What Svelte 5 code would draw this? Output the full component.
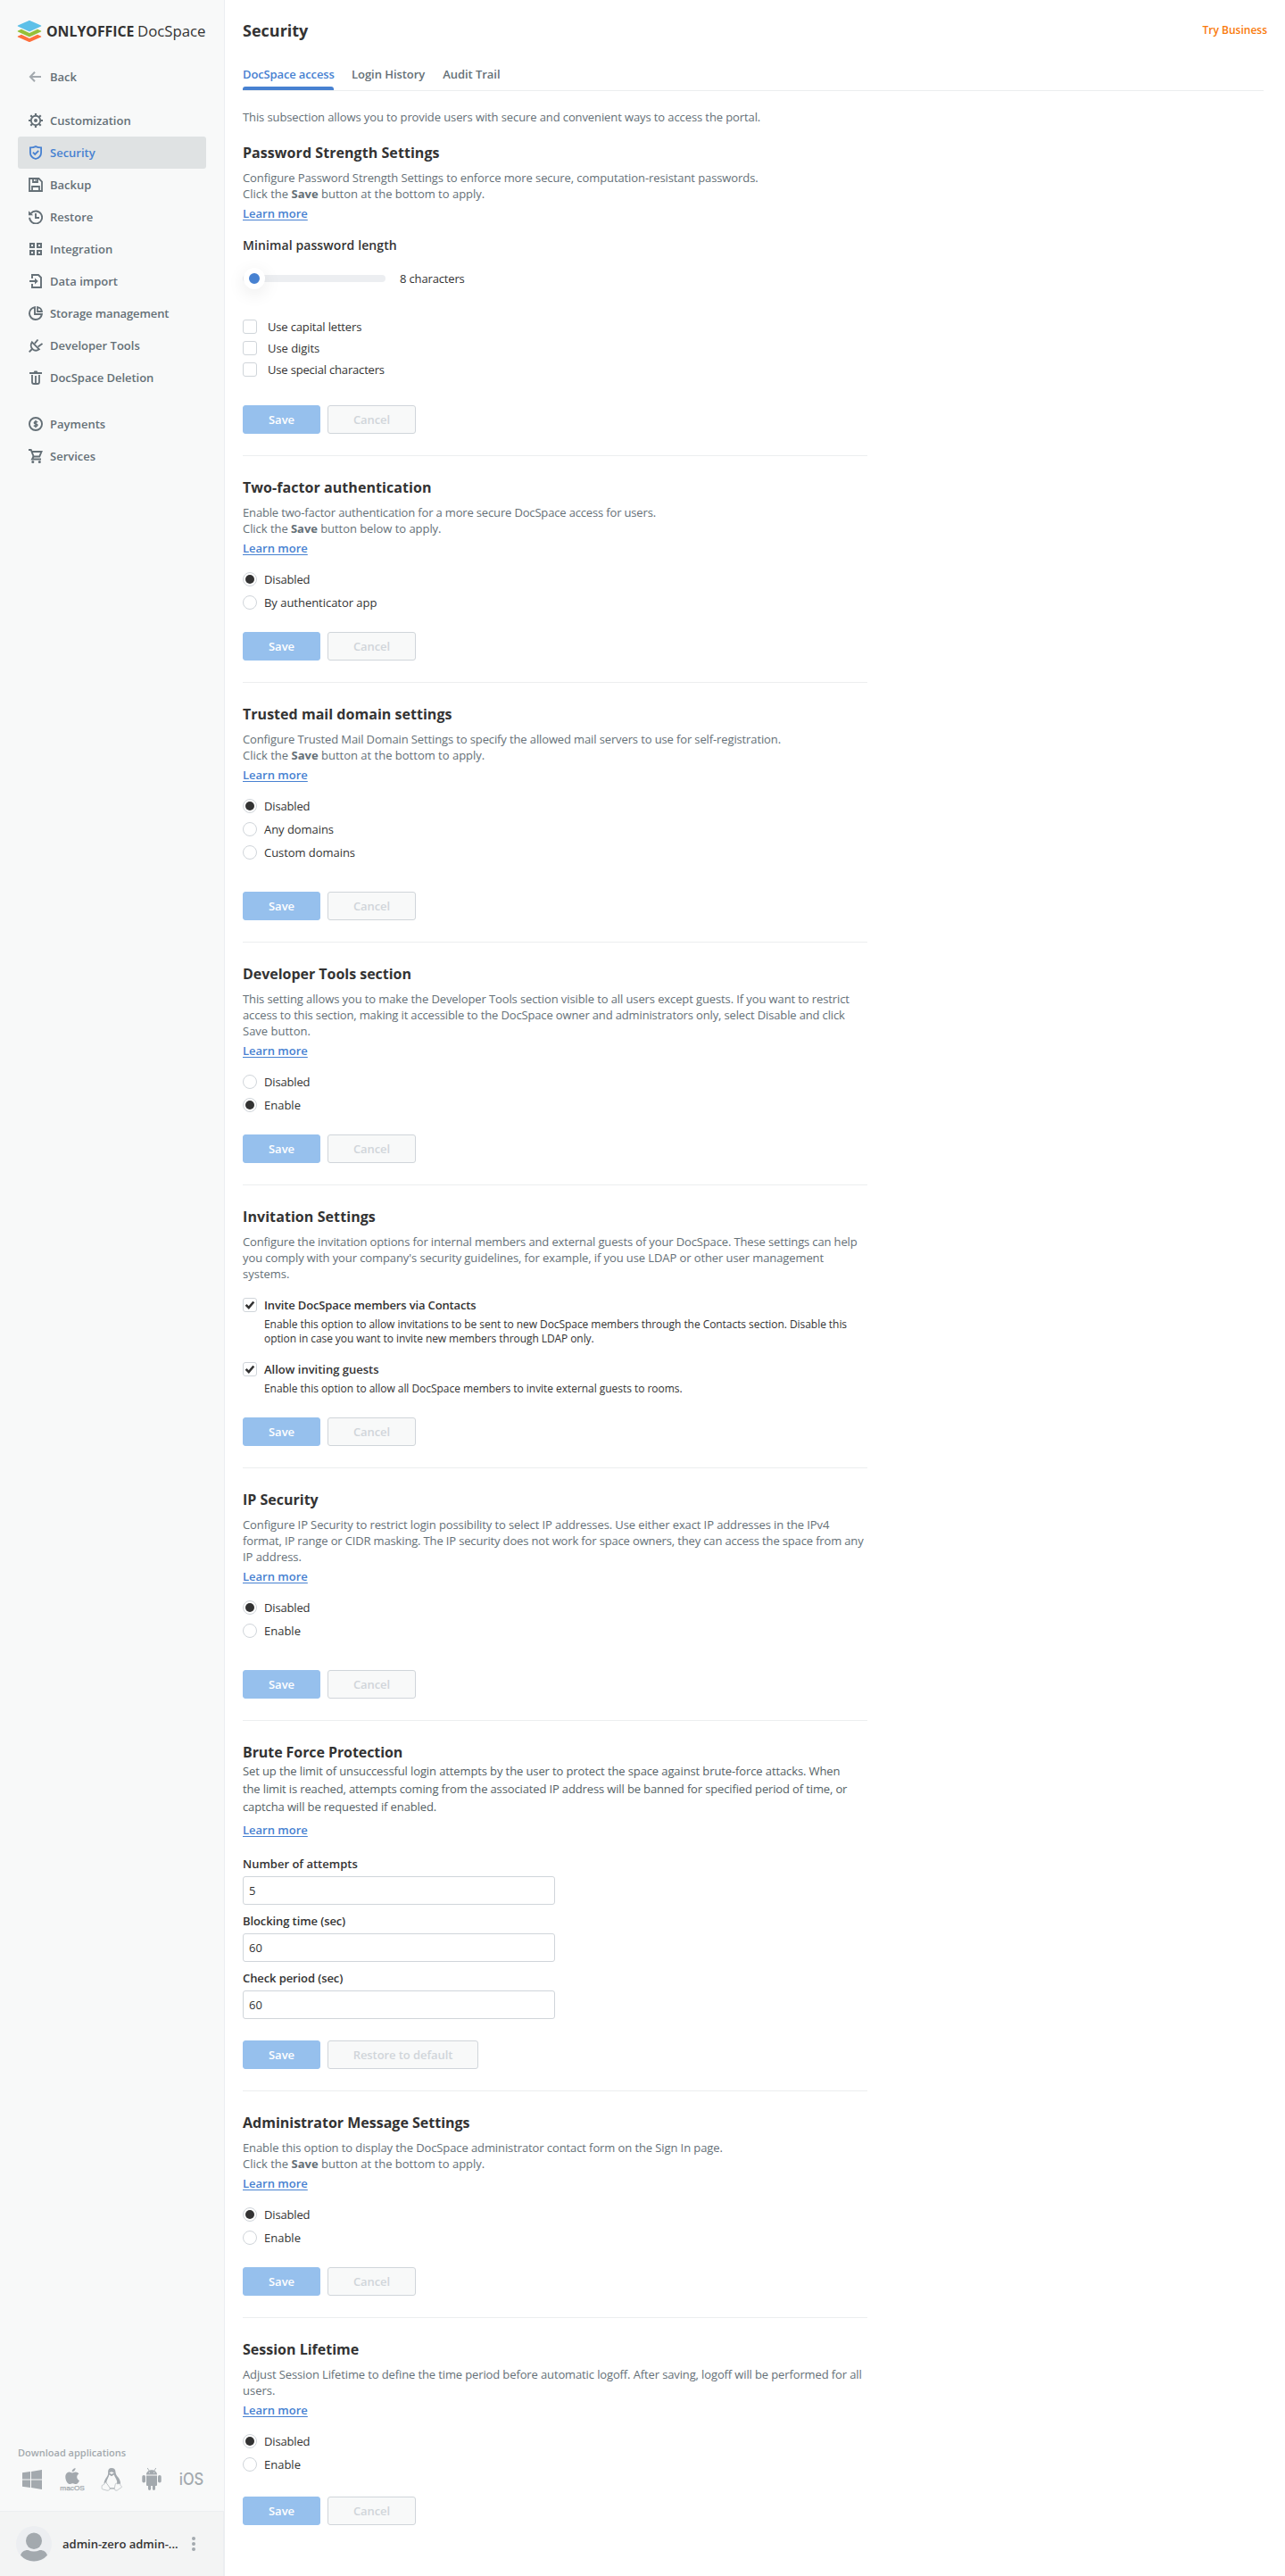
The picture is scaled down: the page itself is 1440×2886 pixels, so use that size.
<script>
  const nav = [
    { id: 'gear', label: 'Customization' },
    { id: 'shield', label: 'Security', active: true },
    { id: 'floppy', label: 'Backup' },
    { id: 'history', label: 'Restore' },
    { id: 'grid', label: 'Integration' },
    { id: 'import', label: 'Data import' },
    { id: 'pie', label: 'Storage management', tracking: -0.1 },
    { id: 'plug', label: 'Developer Tools' },
    { id: 'trash', label: 'DocSpace Deletion', tracking: -0.05 },
    { id: 'coin', label: 'Payments', gap: true },
    { id: 'cart', label: 'Services' },
  ];

  const tabs = ['DocSpace access', 'Login History', 'Audit Trail'];

  // Each copy line is [text, letter spacing in px].
  const sections = [
    {
      title: ['Password Strength Settings', 0.06],
      lines: [['Configure Password Strength Settings to enforce more secure, computation-resistant passwords.', -0.093]],
      hint: ['at the bottom', 0],
      link: true,
      kind: 'password',
      checks: [['Use capital letters', -0.16], ['Use digits', -0.05], ['Use special characters', -0.18]],
    },
    {
      title: ['Two-factor authentication', 0.06],
      lines: [['Enable two-factor authentication for a more secure DocSpace access for users.', -0.16]],
      hint: ['below', -0.05],
      link: true,
      kind: 'radio',
      options: [['Disabled', -0.15], ['By authenticator app', -0.03]],
      selected: 0,
    },
    {
      title: ['Trusted mail domain settings', 0.03],
      lines: [['Configure Trusted Mail Domain Settings to specify the allowed mail servers to use for self-registration.', -0.124]],
      hint: ['at the bottom', 0],
      link: true,
      kind: 'radio',
      options: [['Disabled', -0.15], ['Any domains', -0.05], ['Custom domains', -0.05]],
      selected: 0,
      spacing: 'wide',
    },
    {
      title: ['Developer Tools section', -0.03],
      lines: [
        ['This setting allows you to make the Developer Tools section visible to all users except guests. If you want to restrict', -0.107],
        ['access to this section, making it accessible to the DocSpace owner and administrators only, select Disable and click', -0.145],
        ['Save button.', 0],
      ],
      link: true,
      kind: 'radio',
      options: [['Disabled', -0.15], ['Enable', 0]],
      selected: 1,
    },
    {
      title: ['Invitation Settings', 0.08],
      lines: [
        ['Configure the invitation options for internal members and external guests of your DocSpace. These settings can help', -0.135],
        ["you comply with your company's security guidelines, for example, if you use LDAP or other user management", -0.096],
        ['systems.', 0],
      ],
      kind: 'invite',
      invites: [
        {
          label: ['Invite DocSpace members via Contacts', -0.14],
          notes: [
            ['Enable this option to allow invitations to be sent to new DocSpace members through the Contacts section. Disable this', -0.055],
            ['option in case you want to invite new members through LDAP only.', -0.08],
          ],
        },
        {
          label: ['Allow inviting guests', 0],
          notes: [['Enable this option to allow all DocSpace members to invite external guests to rooms.', -0.043]],
        },
      ],
    },
    {
      title: ['IP Security', 0],
      lines: [
        ['Configure IP Security to restrict login possibility to select IP addresses. Use either exact IP addresses in the IPv4', -0.105],
        ['format, IP range or CIDR masking. The IP security does not work for space owners, they can access the space from any', -0.152],
        ['IP address.', -0.05],
      ],
      link: true,
      kind: 'radio',
      options: [['Disabled', -0.15], ['Enable', 0]],
      selected: 0,
      spacing: 'wide',
    },
    {
      title: ['Brute Force Protection', -0.08],
      lines: [
        ['Set up the limit of unsuccessful login attempts by the user to protect the space against brute-force attacks. When', -0.113],
        ['the limit is reached, attempts coming from the associated IP address will be banned for specified period of time, or', -0.138],
        ['captcha will be requested if enabled.', -0.12],
      ],
      link: true,
      loose: true,
      kind: 'fields',
      fields: [
        { label: ['Number of attempts', 0], value: '5' },
        { label: ['Blocking time (sec)', -0.1], value: '60' },
        { label: ['Check period (sec)', -0.1], value: '60' },
      ],
      secondary: 'Restore to default',
    },
    {
      title: ['Administrator Message Settings', 0],
      lines: [['Enable this option to display the DocSpace administrator contact form on the Sign In page.', -0.1]],
      hint: ['at the bottom', 0],
      link: true,
      kind: 'radio',
      options: [['Disabled', -0.15], ['Enable', 0]],
      selected: 0,
    },
    {
      title: ['Session Lifetime', 0],
      lines: [
        ['Adjust Session Lifetime to define the time period before automatic logoff. After saving, logoff will be performed for all', -0.124],
        ['users.', 0],
      ],
      link: true,
      kind: 'radio',
      options: [['Disabled', -0.15], ['Enable', 0]],
      selected: 0,
      spacing: 'medium',
    },
  ];
</script>

{#snippet icon(id)}
  <svg class="icon" viewBox="0 0 16 16" width="16" height="16" fill="none" stroke="currentColor" stroke-width="2">
    {#if id === 'gear'}
      <circle cx="8" cy="8" r="5.2" stroke-width="1.9" />
      <circle cx="8" cy="8" r="2" fill="currentColor" stroke="none" />
      <path d="M8 0v2.6M8 13.4V16M0 8h2.6M13.4 8H16M2.3 2.3l1.9 1.9M11.8 11.8l1.9 1.9M2.3 13.7l1.9-1.9M11.8 4.2l1.9-1.9" stroke-width="2.2" />
    {:else if id === 'shield'}
      <path d="M8 1.1C6.2 2 4 2.4 1.9 2.4V8c0 3.4 2.6 6 6.1 7 3.5-1 6.1-3.6 6.1-7V2.4C12 2.4 9.800 2 8 1.1z" stroke-width="1.8" />
      <path d="M4.9 7.7l2.300 2.300 4-4.100" stroke-width="1.8" />
    {:else if id === 'floppy'}
      <path d="M1 1h10.500L15 4.500V15H1zM4 15v-5h8v5M5 1v4h5V1" stroke-width="1.8" />
      <path d="M8 2v2" stroke-width="1" />
    {:else if id === 'history'}
      <path d="M2.6 4.200A7 7 0 1 1 1.100 8.800" stroke-width="1.900" />
      <path d="M0 1.200v5h5.200z" fill="currentColor" stroke="none" />
      <path d="M8 4v5h4" stroke-width="1.900" />
    {:else if id === 'grid'}
      <path d="M2 2h4v4H2zM10 2h4v4h-4zM2 10h4v4H2zM10 10h4v4h-4z" />
    {:else if id === 'import'}
      <path d="M4 5V1h7l3 3v11H4v-4" stroke-width="1.900" />
      <path d="M1 8h8" />
      <path d="M7 4.500L10.700 8 7 11.500z" fill="currentColor" stroke="none" />
    {:else if id === 'pie'}
      <path d="M7 1.100A7 7 0 1 0 14.900 9H7z" stroke-width="1.900" />
      <path d="M10 1.100V6h4.900A6 6 0 0 0 10 1.100z" stroke-width="1.800" />
    {:else if id === 'plug'}
      <path d="M0.700 15.300L4 12M3.900 4.300l8 8c-2.300 1.700-5.300 1.800-7.400-.2S2.200 6.700 3.900 4.300z" stroke-width="1.900" />
      <path d="M6.800 5.900L10.500 1.500M10.600 9.500l4.900-3.600" stroke-width="1.900" />
    {:else if id === 'trash'}
      <path d="M1 3h14" stroke-width="2" />
      <path d="M5.500 2.500L6.500 0.500h3l1 2z" fill="currentColor" stroke="none" />
      <path d="M4 5v8c0 1.300.7 2 2 2h4c1.300 0 2-.7 2-2V5M8 6v9" stroke-width="1.800" />
    {:else if id === 'coin'}
      <circle cx="8" cy="8" r="7.050" stroke-width="1.900" />
      <path d="M10.100 6.200C9.600 5.400 6.300 5 6.300 6.700c0 1.600 3.700.9 3.700 2.600 0 1.800-3.500 1.500-4.100.4M8 3.800v8.400" stroke-width="1.500" />
    {:else if id === 'cart'}
      <path d="M0 1h2.700l3 7.500h6.500L14.500 3H4" stroke-width="1.900" />
      <path d="M5.500 8.500L4 11.500h10" stroke-width="1.900" />
      <circle cx="4.800" cy="14.500" r="1.500" fill="currentColor" stroke="none" />
      <circle cx="12.300" cy="14.500" r="1.500" fill="currentColor" stroke="none" />
    {/if}
  </svg>
{/snippet}

{#snippet copy(entry)}<span class="copy" style:letter-spacing="{entry[1]}px">{entry[0]}</span>{/snippet}

<div class="layout">
  <aside class="sidebar">
    <svg class="logo" viewBox="0 0 212 28" width="212" height="28" role="img" aria-label="ONLYOFFICE DocSpace">
      <path d="M0 18.500L4 16.700l9 4.200 9-4.200 4 1.800c.4.300.4.700 0 1l-12 5.300c-.7.300-1.300.3-2 0L0 19.500c-.4-.3-.4-.7 0-1z" fill="#ff6f3d" />
      <path d="M0 12.500l4-1.700 9 4.200 9-4.200 4 1.700c.4.300.4.700 0 1l-12 5.400c-.7.300-1.300.3-2 0L0 13.500c-.4-.3-.4-.7 0-1z" fill="#95c038" />
      <path d="M0 6.600L12 1.300c.7-.3 1.300-.3 2 0l12 5.300c.4.300.4.700 0 1L14 13.100c-.7.300-1.300.3-2 0L0 7.600c-.4-.3-.4-.7 0-1z" fill="#5dc0e8" />
      <text x="32" y="19" font-weight="700" font-size="16.600" textLength="98.500" lengthAdjust="spacingAndGlyphs">ONLYOFFICE</text>
      <text x="134" y="19" font-weight="400" font-size="16.600" textLength="76.500" lengthAdjust="spacingAndGlyphs">DocSpace</text>
    </svg>

    <a class="back" href="#back">
      <svg class="icon" viewBox="0 0 16 16" width="16" height="16" fill="none" stroke="#a3a9ae" stroke-width="2">
        <path d="M14 8H2.500M7 2.800L1.900 8 7 13.200" />
      </svg>
      <span>Back</span>
    </a>

    <nav>
      {#each nav as item}
        <a class="nav-item" class:active={item.active} class:gap={item.gap} href="#{item.id}">
          {@render icon(item.id)}
          {@render copy([item.label, item.tracking ?? 0])}
        </a>
      {/each}
    </nav>

    <div class="downloads">
      <div class="downloads-title">Download applications</div>
      <div class="platforms">
        <svg viewBox="0 0 32 32" width="32" height="32" fill="#a3a9ae">
          <path d="M5 8.300l9-1.300v8.500H5zM15 6.900L27 5v10.500H15zM5 16.500h9V25l-9-1.300zM15 16.500h12V27l-12-1.900z" />
        </svg>
        <svg viewBox="0 0 32 32" width="32" height="32" fill="#a3a9ae">
          <path d="M19.600 3c.1 2.400-1.800 4.300-4 4.300C15.400 5.100 17.500 3.200 19.600 3z" />
          <path d="M15.900 8.500c1 0 2-.9 3.800-.9 1.500 0 2.900.8 3.700 2-3.200 1.900-2.700 6.200.6 7.500-.8 2-2.200 4-3.900 4-1.500 0-2-.8-3.700-.8s-2.300.8-3.600.8c-2 0-4.500-4.300-4.500-8 0-3.400 2.200-5.500 4.500-5.500 1.400 0 2.300.9 3.100.9z" />
          <text class="macos" x="2.300" y="27.700" textLength="27.500" lengthAdjust="spacingAndGlyphs">macOS</text>
        </svg>
        <svg viewBox="0 0 32 32" width="32" height="32">
          <path d="M16 3c-2.800 0-4 2-3.900 4.500.1 2.600-.1 3.700-1.600 5.800-1.500 2-2.700 4.300-3 7l3 2 3.500 4.300h5.500l4.500-4.500 2-1.500c0-3-1-5-2.500-7-1.600-2-3-3.500-3.100-6.600C20.300 4.500 18.800 3 16 3z" fill="#a3a9ae" />
          <path d="M13.300 10.500l2.700 1.800 2.800-1.800c.5 2.500 2.800 4.500 3.300 7.500.3 1.500-.2 3-1.200 4.200l-1 3h-6l-3.300-5c-.8-1.500.3-4 1.300-5.700.7-1.200 1.200-2.500 1.400-4z" fill="#f8f9f9" />
          <path d="M13.300 8.200l2.700-1 2.800 1-2.700 1.900z" fill="#f8f9f9" />
          <path d="M9.500 18.800L14 25c.8 1.800-.8 3.600-3 3.200L5.800 26.800c-1.200-.5-.6-2-.6-3.400-.2-1 .5-1.400 1.600-1.500 1.400-.2 1.200-2.600 2.700-3.100zM21.300 20c1.200 1 2.500 1.200 3.600 0 1.300 1.400.3 2 2.100 3.400.9.900.1 1.600-1.200 2.200-2 1-3 2.800-4.700 2.600-2.200-.3-2-2.200-1.500-4 .4-1.600.5-3.500 1.700-4.200z" fill="#f8f9f9" stroke="#a3a9ae" stroke-width=".6" />
        </svg>
        <svg viewBox="0 0 32 32" width="32" height="32" fill="#a3a9ae">
          <path d="M10 10.500C10 7.500 12.800 5.300 16 5.300s6 2.200 6 5.200zM10 11.500h12v10.300c0 .8-.5 1.200-1.200 1.200H20v3.200c0 2.300-3.100 2.300-3.100 0V23h-1.800v3.200c0 2.300-3.100 2.300-3.100 0V23h-.8c-.7 0-1.200-.4-1.200-1.200z" />
          <rect x="5.300" y="11" width="3.700" height="8.500" rx="1.800" />
          <rect x="23" y="11" width="3.700" height="8.500" rx="1.800" />
          <path d="M13.500 6.500L11.200 3M18.500 6.500L20.800 3" stroke="#a3a9ae" stroke-width=".9" />
          <circle cx="13.300" cy="8.100" r=".6" fill="#f8f9f9" />
          <circle cx="18.700" cy="8.100" r=".6" fill="#f8f9f9" />
        </svg>
        <svg viewBox="0 0 32 32" width="32" height="32" fill="#a3a9ae">
          <text class="ios" x="1.800" y="22.300" textLength="27.500" lengthAdjust="spacingAndGlyphs">iOS</text>
        </svg>
      </div>
    </div>

    <div class="profile">
      <svg class="avatar" viewBox="0 0 40 40" width="40" height="40">
        <circle cx="20" cy="20" r="20" fill="#eceef1" />
        <ellipse cx="20" cy="16.700" rx="9" ry="9.300" fill="#a3a9ae" />
        <path d="M5 32.800c1.300-4 4.500-6.100 8.500-5.800 4.200 2 8.800 2 13 0 4-.3 7.200 1.800 8.500 5.800A20 20 0 0 1 5 32.800z" fill="#a3a9ae" />
      </svg>
      <span class="name">admin-zero admin-...</span>
      <svg class="dots" viewBox="0 0 4 16" width="4" height="16" fill="#a3a9ae">
        <circle cx="2" cy="2" r="2" /><circle cx="2" cy="8" r="2" /><circle cx="2" cy="14" r="2" />
      </svg>
    </div>
  </aside>

  <main>
    <header>
      <h1>Security</h1>
      <a class="try" href="#business">Try Business</a>
    </header>

    <div class="tabs">
      {#each tabs as tab, i}
        <div class="tab" class:current={i === 0}>{tab}</div>
      {/each}
    </div>

    <div class="content">
      <p class="intro">This subsection allows you to provide users with secure and convenient ways to access the portal.</p>

      {#each sections as s}
        <section class:loose={s.loose}>
          <h2>{@render copy(s.title)}</h2>
          {#each s.lines as line}
            <p class="desc">{@render copy(line)}</p>
          {/each}
          {#if s.hint}
            <p class="desc" style:letter-spacing="{s.hint[1]}px">Click the <b>Save</b> button {s.hint[0]} to apply.</p>
          {/if}
          {#if s.link}
            <a class="learn" href="#learn">Learn more</a>
          {/if}

          {#if s.kind === 'password'}
            <h3>Minimal password length</h3>
            <div class="slider-row">
              <div class="track"><div class="thumb"></div></div>
              <span class="slider-value">8 characters</span>
            </div>
            <div class="checks">
              {#each s.checks as label}
                <div class="check-row"><span class="box"></span>{@render copy(label)}</div>
              {/each}
            </div>
          {:else if s.kind === 'radio'}
            <div class="radios {s.spacing ?? ''}">
              {#each s.options as label, i}
                <div class="radio-row">
                  <span class="radio" class:on={i === s.selected}></span>{@render copy(label)}
                </div>
              {/each}
            </div>
          {:else if s.kind === 'invite'}
            <div class="invites">
              {#each s.invites as inv}
                <div class="invite">
                  <span class="box">
                    <svg viewBox="0 0 14 14" width="14" height="14" fill="none" stroke="#333" stroke-width="2.6">
                      <path d="M2.600 6.800l3.200 3.300L11.300 3.500" />
                    </svg>
                  </span>
                  <div>
                    <div class="invite-label">{@render copy(inv.label)}</div>
                    <div class="note">
                      {#each inv.notes as line}
                        <div>{@render copy(line)}</div>
                      {/each}
                    </div>
                  </div>
                </div>
              {/each}
            </div>
          {:else if s.kind === 'fields'}
            <div class="fields">
              {#each s.fields as f}
                <div class="field">
                  <div class="field-label">{@render copy(f.label)}</div>
                  <div class="input">{f.value}</div>
                </div>
              {/each}
            </div>
          {/if}

          <div class="buttons">
            <button class="save" disabled>Save</button>
            <button class="cancel" class:restore={s.secondary} disabled>{s.secondary ?? 'Cancel'}</button>
          </div>
        </section>
      {/each}
    </div>
  </main>
</div>

<style>
  :global(body) {
    margin: 0;
    background: #fff;
  }
  * {
    box-sizing: border-box;
  }
  h1, h2, h3, p {
    margin: 0;
  }
  a {
    color: inherit;
    text-decoration: none;
  }
  .layout {
    display: flex;
    width: 1440px;
    height: 2886px;
    font-family: 'Open Sans', sans-serif;
    font-size: 13px;
    line-height: 18px;
    color: #333;
  }
  .copy {
    white-space: nowrap;
  }

  .sidebar {
    display: flex;
    flex-direction: column;
    flex: none;
    width: 252px;
    background: #f8f9f9;
    border-right: 1px solid #eceef1;
    font-weight: 600;
    color: #657077;
  }
  .logo {
    flex: none;
    margin: 22px 0 0 20px;
    fill: #333;
    overflow: visible;
  }
  .icon {
    flex: none;
    display: block;
  }
  .back {
    display: flex;
    align-items: center;
    gap: 8px;
    height: 36px;
    margin: 18px 20px 0;
    padding: 0 12px;
  }
  .back .icon {
    margin-top: -1px;
  }
  nav {
    margin: 13px 20px 0;
  }
  .nav-item {
    display: flex;
    align-items: center;
    gap: 8px;
    height: 36px;
    padding: 0 12px;
    border-radius: 3px;
    white-space: nowrap;
  }
  .nav-item.gap {
    margin-top: 16px;
  }
  .nav-item.active {
    background: #dfe2e3;
    color: #4781d1;
  }
  .downloads {
    margin-top: auto;
    padding: 0 20px 17px;
  }
  .downloads-title {
    font-size: 11px;
    line-height: 17px;
    color: #a3a9ae;
    margin-bottom: 6px;
  }
  .platforms {
    display: flex;
    gap: 12.7px;
    height: 34px;
  }
  .platforms svg {
    flex: none;
  }
  .macos {
    font: 400 8px 'Liberation Sans', sans-serif;
    stroke: #a3a9ae;
    stroke-width: 0.25px;
  }
  .ios {
    font: 500 18px Inter, sans-serif;
  }
  .profile {
    display: flex;
    align-items: center;
    flex: none;
    height: 73px;
    padding-left: 18px;
    background: #f3f4f4;
    border-top: 1px solid #eceef1;
    border-right: 1px solid #eceef1;
  }
  .name {
    width: 145px;
    margin-left: 12px;
    color: #333;
    white-space: nowrap;
  }

  main {
    flex: 1;
    padding: 0 20px;
  }
  header {
    display: flex;
    justify-content: space-between;
    height: 74px;
    padding-top: 22px;
  }
  h1 {
    font-size: 18px;
    line-height: 25px;
    font-weight: 700;
  }
  .try {
    padding-top: 3px;
    font-size: 12px;
    font-weight: 600;
    color: #f97a0b;
  }
  .tabs {
    display: flex;
    gap: 20px;
    height: 28px;
    margin-right: 4px;
    border-bottom: 1px solid #eceeef;
    color: #657077;
    font-weight: 600;
    letter-spacing: -0.05px;
  }
  .tab {
    height: 27px;
    white-space: nowrap;
  }
  .tab.current {
    width: 102px;
    color: #4781d1;
    letter-spacing: -0.13px;
  }
  .tab.current::after {
    content: '';
    display: block;
    height: 4px;
    margin-top: 5px;
    border-radius: 3px 3px 0 0;
    background: #4781d1;
  }
  .content {
    width: 700px;
    padding-top: 20px;
  }
  .intro {
    color: #657077;
    letter-spacing: -0.105px;
    white-space: nowrap;
  }
  section {
    padding: 24px 0;
    border-top: 1px solid #eceeef;
  }
  .intro + section {
    padding-top: 20px;
    border-top: 0;
  }
  h2 {
    margin-bottom: 8px;
    font-size: 16px;
    line-height: 22px;
    font-weight: 700;
  }
  .desc {
    color: #657077;
  }
  .learn {
    display: block;
    width: max-content;
    margin-top: 4px;
    font-weight: 600;
    color: #4781d1;
    text-decoration: underline;
    text-decoration-thickness: 1px;
    text-underline-offset: 2px;
  }
  .loose h2 {
    margin-bottom: 0;
  }
  .loose .desc {
    line-height: 20px;
    color: #555f65;
  }
  .loose .learn {
    margin-top: 7px;
  }

  h3 {
    margin-top: 17px;
    font-size: 14px;
    line-height: 19px;
    font-weight: 600;
    letter-spacing: 0.1px;
  }
  .slider-row {
    display: flex;
    align-items: center;
    gap: 16px;
    height: 24px;
    margin-top: 16px;
  }
  .slider-value {
    letter-spacing: -0.15px;
  }
  .track {
    display: flex;
    align-items: center;
    width: 160px;
    height: 8px;
    border-radius: 4px;
    background: #eceef1;
  }
  .thumb {
    width: 24px;
    height: 24px;
    margin-left: 1px;
    border: 6px solid #fff;
    border-radius: 50%;
    background: #4781d1;
    box-shadow: 0 5px 20px rgba(4, 15, 27, 0.09);
  }
  .checks {
    display: flex;
    flex-direction: column;
    gap: 6px;
    margin: 33px 0 31px;
  }
  .check-row {
    display: flex;
    align-items: center;
    gap: 12px;
  }
  .box {
    display: block;
    flex: none;
    width: 16px;
    height: 16px;
    border: 1px solid #d0d5da;
    border-radius: 3px;
    background: #fff;
  }
  .box svg {
    display: block;
  }

  .radios {
    display: flex;
    flex-direction: column;
    gap: 8px;
    margin: 17px 0 24px;
  }
  .radios.wide {
    margin-bottom: 35px;
  }
  .radios.medium {
    margin-bottom: 27px;
  }
  .radio-row {
    display: flex;
    align-items: center;
    gap: 8px;
  }
  .radio {
    display: flex;
    align-items: center;
    justify-content: center;
    width: 16px;
    height: 16px;
    border: 1px solid #d0d5da;
    border-radius: 50%;
  }
  .radio.on::after {
    content: '';
    width: 10px;
    height: 10px;
    border-radius: 50%;
    background: #333;
  }

  .invites {
    display: flex;
    flex-direction: column;
    gap: 17px;
    margin: 17px 0 24px;
  }
  .invite {
    display: flex;
    gap: 8px;
  }
  .invite .box {
    margin-top: 1px;
  }
  .invite-label {
    font-weight: 600;
  }
  .note {
    margin-top: 5px;
    font-size: 12px;
    line-height: 16px;
  }

  .fields {
    display: flex;
    flex-direction: column;
    gap: 9px;
    margin: 20px 0 24px;
  }
  .field-label {
    margin-bottom: 5px;
    font-weight: 600;
  }
  .input {
    width: 350px;
    height: 32px;
    padding: 6px 6px;
    border: 1px solid #d0d5da;
    border-radius: 3px;
  }

  .buttons {
    display: flex;
    gap: 8px;
  }
  button {
    height: 32px;
    padding: 0;
    border: 1px solid #96c0ed;
    border-radius: 3px;
    font: 600 13px/20px 'Open Sans', sans-serif;
  }
  .save {
    width: 87px;
    background: #96c0ed;
    color: #fff;
  }
  .cancel {
    width: 99px;
    background: #f8f9f9;
    border-color: #d0d5da;
    color: #d0d5da;
    letter-spacing: -0.08px;
  }
  .cancel.restore {
    width: 169px;
  }
</style>
